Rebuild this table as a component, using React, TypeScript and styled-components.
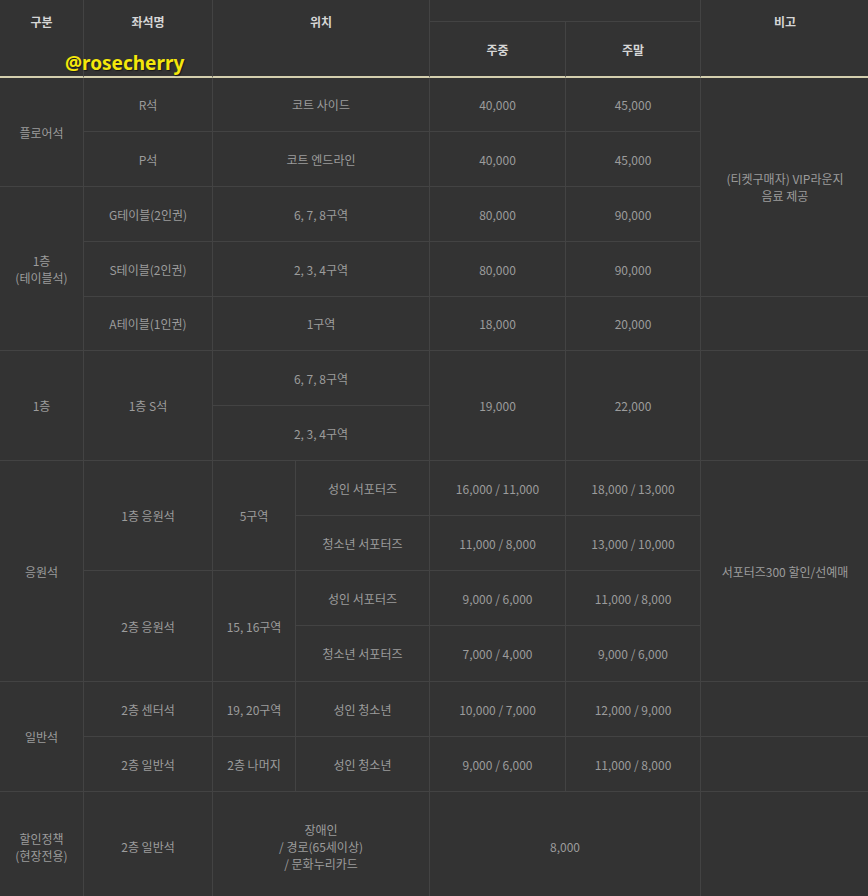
import React from 'react'
import styled, { createGlobalStyle } from 'styled-components'

const GlobalStyle = createGlobalStyle`
  html, body {
    margin: 0;
    padding: 0;
    background: #333333;
  }
`

const Frame = styled.div`
  position: relative;
  width: 868px;
  height: 896px;
  overflow: hidden;
  background: #333333;
  font-family: 'Noto Sans CJK KR', 'Noto Sans', sans-serif;
`

const Table = styled.table`
  width: 870px;
  margin-top: -33px;
  table-layout: fixed;
  border-collapse: separate;
  border-spacing: 0;
`

const Row = styled.tr<{ $h?: number }>`
  height: ${(p) => p.$h || 55}px;
`

const HeadCell = styled.th<{ $thick?: boolean; $lift?: number }>`
  box-sizing: border-box;
  padding: 0 4px ${(p) => p.$lift || 0}px;
  border-right: 1px solid #434343;
  border-bottom: ${(p) => (p.$thick ? '2px solid #d4cfae' : '1px solid #434343')};
  color: #d6d6d6;
  font-size: 12px;
  font-weight: 700;
  line-height: 17px;
  text-align: center;
  vertical-align: middle;
`

const Cell = styled.td`
  box-sizing: border-box;
  padding: 0 4px;
  border-right: 1px solid #434343;
  border-bottom: 1px solid #434343;
  color: #9c9c9c;
  font-size: 12px;
  line-height: 17px;
  text-align: center;
  vertical-align: middle;
  white-space: nowrap;
`

const NoteCell = styled(Cell)`
  overflow: hidden;
  white-space: normal;
`

const Watermark = styled.div`
  position: absolute;
  left: 65px;
  top: 50px;
  font-family: 'Noto Sans', 'Open Sans', sans-serif;
  font-size: 19px;
  font-weight: 700;
  color: #f4e70c;
  text-shadow: 1px 1px 1px #1a1a1a;
`

const widths = [84, 129, 83, 134, 136, 135, 169]

export default function App() {
  return (
    <Frame>
      <GlobalStyle />
      <Table>
        <colgroup>
          {widths.map((w, i) => (
            <col key={i} style={{ width: w }} />
          ))}
        </colgroup>
        <thead>
          <Row>
            <HeadCell rowSpan={2} $thick>구분</HeadCell>
            <HeadCell rowSpan={2} $thick>좌석명</HeadCell>
            <HeadCell rowSpan={2} colSpan={2} $thick>위치</HeadCell>
            <HeadCell colSpan={2} $lift={8}>가격 (단위 : 원, VAT 포함)</HeadCell>
            <HeadCell rowSpan={2} $thick>비고</HeadCell>
          </Row>
          <Row $h={56}>
            <HeadCell $thick>주중</HeadCell>
            <HeadCell $thick>주말</HeadCell>
          </Row>
        </thead>
        <tbody>
          <Row $h={54}>
            <Cell rowSpan={2}>플로어석</Cell>
            <Cell>R석</Cell>
            <Cell colSpan={2}>코트 사이드</Cell>
            <Cell>40,000</Cell>
            <Cell>45,000</Cell>
            <NoteCell rowSpan={4}>
              (티켓구매자) VIP라운지
              <br />
              음료 제공
            </NoteCell>
          </Row>
          <Row>
            <Cell>P석</Cell>
            <Cell colSpan={2}>코트 엔드라인</Cell>
            <Cell>40,000</Cell>
            <Cell>45,000</Cell>
          </Row>
          <Row>
            <Cell rowSpan={3}>
              1층
              <br />
              (테이블석)
            </Cell>
            <Cell>G테이블(2인권)</Cell>
            <Cell colSpan={2}>6, 7, 8구역</Cell>
            <Cell>80,000</Cell>
            <Cell>90,000</Cell>
          </Row>
          <Row>
            <Cell>S테이블(2인권)</Cell>
            <Cell colSpan={2}>2, 3, 4구역</Cell>
            <Cell>80,000</Cell>
            <Cell>90,000</Cell>
          </Row>
          <Row $h={54}>
            <Cell>A테이블(1인권)</Cell>
            <Cell colSpan={2}>1구역</Cell>
            <Cell>18,000</Cell>
            <Cell>20,000</Cell>
            <NoteCell />
          </Row>
          <Row>
            <Cell rowSpan={2}>1층</Cell>
            <Cell rowSpan={2}>1층 S석</Cell>
            <Cell colSpan={2}>6, 7, 8구역</Cell>
            <Cell rowSpan={2}>19,000</Cell>
            <Cell rowSpan={2}>22,000</Cell>
            <NoteCell rowSpan={2} />
          </Row>
          <Row>
            <Cell colSpan={2}>2, 3, 4구역</Cell>
          </Row>
          <Row>
            <Cell rowSpan={4}>응원석</Cell>
            <Cell rowSpan={2}>1층 응원석</Cell>
            <Cell rowSpan={2}>5구역</Cell>
            <Cell>성인 서포터즈</Cell>
            <Cell>16,000 / 11,000</Cell>
            <Cell>18,000 / 13,000</Cell>
            <NoteCell rowSpan={4}>서포터즈300 할인/선예매</NoteCell>
          </Row>
          <Row>
            <Cell>청소년 서포터즈</Cell>
            <Cell>11,000 / 8,000</Cell>
            <Cell>13,000 / 10,000</Cell>
          </Row>
          <Row>
            <Cell rowSpan={2}>2층 응원석</Cell>
            <Cell rowSpan={2}>15, 16구역</Cell>
            <Cell>성인 서포터즈</Cell>
            <Cell>9,000 / 6,000</Cell>
            <Cell>11,000 / 8,000</Cell>
          </Row>
          <Row $h={56}>
            <Cell>청소년 서포터즈</Cell>
            <Cell>7,000 / 4,000</Cell>
            <Cell>9,000 / 6,000</Cell>
          </Row>
          <Row>
            <Cell rowSpan={2}>일반석</Cell>
            <Cell>2층 센터석</Cell>
            <Cell>19, 20구역</Cell>
            <Cell>성인 청소년</Cell>
            <Cell>10,000 / 7,000</Cell>
            <Cell>12,000 / 9,000</Cell>
            <NoteCell />
          </Row>
          <Row>
            <Cell>2층 일반석</Cell>
            <Cell>2층 나머지</Cell>
            <Cell>성인 청소년</Cell>
            <Cell>9,000 / 6,000</Cell>
            <Cell>11,000 / 8,000</Cell>
            <NoteCell />
          </Row>
          <Row $h={110}>
            <Cell>
              할인정책
              <br />
              (현장전용)
            </Cell>
            <Cell>2층 일반석</Cell>
            <Cell colSpan={2}>
              장애인
              <br />/ 경로(65세이상)
              <br />/ 문화누리카드
            </Cell>
            <Cell colSpan={2}>8,000</Cell>
            <NoteCell />
          </Row>
        </tbody>
      </Table>
      <Watermark>@rosecherry</Watermark>
    </Frame>
  )
}
